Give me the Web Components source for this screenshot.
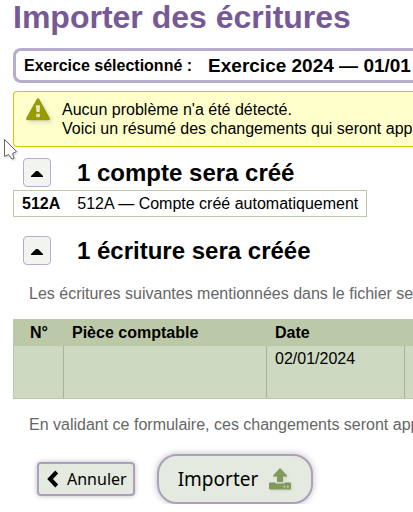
<!DOCTYPE html>
<html lang="fr">
<head>
<meta charset="utf-8">
<title>Importer des écritures</title>
<style>
html, body { margin: 0; overflow: hidden; }
body { background: #fff; color: #000; font: 16px/19px "Liberation Sans", Arial, sans-serif; }
</style>
</head>
<body>
<import-page></import-page>
<script>
const define = (name, html, setup) => customElements.define(name, class extends HTMLElement {
  constructor() {
    super();
    const t = document.createElement("template");
    t.innerHTML = html;
    this.attachShadow({ mode: "open" }).append(t.content.cloneNode(true));
  }
  connectedCallback() { if (setup) setup(this, this.shadowRoot); }
});

define("year-bar", `<style>
  :host { display: block; }
  dl { margin: 0; display: flex; align-items: center; gap: 16px; height: 29px; padding-left: 8px;
    border: 3px solid #b8abcb; border-right: 0; border-radius: 8px 0 0 8px; white-space: nowrap; font-weight: bold; }
  dd { margin: 0; font-size: 19px; }
</style><dl><dt><slot name="label"></slot></dt><dd><slot></slot></dd></dl>`);

define("alert-block", `<style>
  :host { display: flex; gap: 12px; padding: 8px 0 8px 12px; margin-top: 8px; white-space: nowrap;
    background: #ffc; border: 1px solid #cc0; border-right: 0; border-radius: 4px 0 0 4px; }
  svg { flex: none; width: 24px; height: 24px; margin-top: -2px; filter: drop-shadow(2px 2px 2px #bbb9); }
  p { margin: 0; }
</style>
<svg viewBox="0 0 24 24" aria-hidden="true"><path fill="#990" fill-rule="evenodd" d="M10.6 1.3Q12 -.9 13.4 1.3L23.7 20Q24.5 22 22.5 22.2H1.5Q-.5 22 .3 20ZM9.9 7.2L10.4 14H13.6L14.1 7.2ZM10.2 15.8V19.2H13.8V15.8Z"/></svg>
<p><slot></slot></p>`);

define("toggle-section", `<style>
  :host { display: block; }
  header { display: flex; align-items: center; gap: 26px; padding-left: 10px; }
  h2 { margin: 0; font-size: 24px; line-height: 29px; }
  button { flex: none; width: 28px; height: 29px; padding: 0; display: grid; place-items: center;
    background: #f1f4ef; border: 1px solid #b8abcb; border-radius: 4px; }
  svg { width: 12px; height: 6px; margin-top: 3px; }
</style>
<header><button type="button" aria-label="Replier" aria-expanded="true"><svg viewBox="0 0 12 6"><path d="M0 6V5L5 0H7L12 5V6Z"/></svg></button><h2><slot name="title"></slot></h2></header>
<div><slot></slot></div>`, (host, root) => {
  const b = root.querySelector("button"), d = root.querySelector("div");
  b.onclick = () => { d.hidden = !d.hidden; b.setAttribute("aria-expanded", String(!d.hidden)); };
});

define("account-table", `<style>
  :host { display: block; margin-top: 3px; }
  table { border-collapse: separate; border-spacing: 0; border: 1px solid #bcc9a9; white-space: nowrap; }
  th, td { padding: 3px 8px; height: 19px; text-align: left; }
  td { padding-left: 9px; }
</style><table><tbody><tr><th scope="row">512A</th><td>512A — Compte créé automatiquement</td></tr></tbody></table>`);

define("entry-table", `<style>
  :host { display: block; }
  table { width: 100%; table-layout: fixed; border-collapse: separate; border-spacing: 0; white-space: nowrap;
    border: 1px solid #bcc9a9; border-right: 0; background: #cdd9c1; }
  th, td { padding: 3px 8px; text-align: left; vertical-align: top; height: 20px; }
  th { background: #bcc9a9; }
  th:first-child { text-align: center; }
  td { height: 46px; border-right: 1px solid #a5b68f; }
  td:last-child { border-right: 0; }
  .n { width: 34px; } .p { width: 187px; } .d { width: 122px; }
  th:last-child, td:last-child { padding: 0; }
</style><table><thead><tr><th class="n" scope="col">N°</th><th class="p" scope="col">Pièce comptable</th><th class="d" scope="col">Date</th><th></th></tr></thead>
<tbody><tr><td></td><td></td><td>02/01/2024</td><td></td></tr></tbody></table>`);

define("help-text", `<style>
  :host { display: block; color: #666; white-space: nowrap; }
  p { margin: 0 0 0 16px; }
</style><p><slot></slot></p>`);

define("form-button", `<style>
  :host { display: block; }
  button { display: flex; align-items: center; gap: 8px; height: 34px; padding: 0 6px 0 8px; color: #000;
    font: 16px/24px "Noto Sans", sans-serif; white-space: nowrap; background: #e4eadf;
    border: 2px solid #aca0bc; border-radius: 4px; box-shadow: 0 0 5px #bbb; }
  :host([main]) button { height: 50px; font-size: 19px; gap: 10px; padding: 0 19px; border-radius: 20px; box-shadow: 0 0 7px #bbb; }
</style><button type="button"><slot name="before"></slot><slot></slot><slot name="after"></slot></button>`);

define("import-page", `<style>
  :host { display: block; padding-left: 13px; }
  h1 { margin: 0; padding-bottom: 14px; font-size: 32px; line-height: 34px; color: #765996; white-space: nowrap; }
  .s1 { margin-top: 11px; } .s2 { margin-top: 19px; }
  .h1 { margin-top: 19px; } .table { margin-top: 16px; } .h2 { margin-top: 16px; }
  footer { display: flex; align-items: center; gap: 22px; margin-top: 20px; padding-left: 24px; }
  .back { width: 12px; height: 18px; } .up { width: 24px; height: 24px; filter: drop-shadow(1px 1px 1px #ccc); }
  .pointer { position: absolute; left: 3px; top: 137px; width: 16px; height: 26px; filter: drop-shadow(1px 1px 1px #ccc); }
</style>
<h1>Importer des écritures</h1>
<year-bar><span slot="label">Exercice sélectionné :</span>Exercice 2024 — 01/01</year-bar>
<alert-block>Aucun problème n'a été détecté.<br>Voici un résumé des changements qui seront app</alert-block>
<toggle-section class="s1"><span slot="title">1 compte sera créé</span><account-table></account-table></toggle-section>
<toggle-section class="s2"><span slot="title">1 écriture sera créée</span>
<help-text class="h1">Les écritures suivantes mentionnées dans le fichier se</help-text>
<entry-table class="table"></entry-table></toggle-section>
<help-text class="h2">En validant ce formulaire, ces changements seront app</help-text>
<footer>
<form-button><svg slot="before" class="back" viewBox="0 0 12 18" aria-hidden="true"><path d="M9.7 2L3 9L9.7 16" fill="none" stroke="#000" stroke-width="4"/></svg>Annuler</form-button>
<form-button main>Importer<svg slot="after" class="up" viewBox="0 0 24 24" aria-hidden="true"><path fill="#7f9a5b" fill-rule="evenodd" d="M12 1L19 8.5V9.5H15V15H9V9.5H5V8.5ZM2 15.5H7.5V16.5H16.5V15.5H22Q23 15.5 23 16.5V21.5Q23 22.5 22 22.5H2Q1 22.5 1 21.5V16.5Q1 15.5 2 15.5ZM15.7 18.8V20.4H17.3V18.8ZM19 18.8V20.4H20.6V18.8Z"/></svg></form-button>
</footer>
<svg class="pointer" viewBox="0 0 16 26" aria-hidden="true"><path d="M1.5 2.5V19.5L5.5 17.5L9 22L11 21.5L9.5 16.5L13.5 14.5Z" fill="#fff" stroke="#666"/></svg>`);
</script>
</body>
</html>
